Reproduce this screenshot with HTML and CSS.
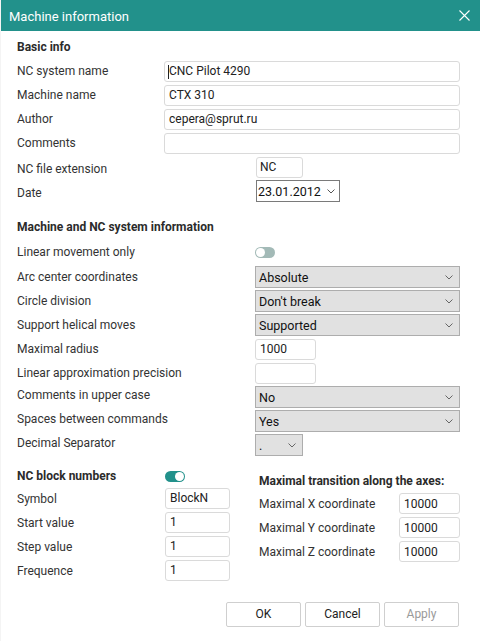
FILE: index.html
```html
<!DOCTYPE html>
<html>
<head>
<meta charset="utf-8">
<link rel="stylesheet" href="styles.css">
</head>
<body>
<div class="dialog">
  <div class="titlebar">
    <span class="title">Machine information</span>
    <svg class="close" width="11" height="11" viewBox="0 0 11 11"><path d="M0.5 0.5L10.5 10.5M10.5 0.5L0.5 10.5" stroke="#fff" stroke-width="1.1" fill="none"/></svg>
  </div>
  <div class="body">
    <div class="section basic">
      <div class="heading">Basic info</div>
      <div class="row"><span class="label">NC system name</span><div class="field wide"><span class="caret"></span>CNC Pilot 4290</div></div>
      <div class="row"><span class="label">Machine name</span><div class="field wide">CTX 310</div></div>
      <div class="row"><span class="label">Author</span><div class="field wide">cepera@sprut.ru</div></div>
      <div class="row"><span class="label">Comments</span><div class="field wide"></div></div>
      <div class="row"><span class="label down">NC file extension</span><div class="field ext">NC</div></div>
      <div class="row"><span class="label down">Date</span><div class="date">23.01.2012<svg class="chev" width="8" height="5" viewBox="0 0 8 5"><path d="M0.5 0.5L4 4L7.5 0.5" stroke="#555" fill="none"/></svg></div></div>
    </div>

    <div class="section machine">
      <div class="heading">Machine and NC system information</div>
      <div class="row trow"><span class="label">Linear movement only</span><span class="toggle off"><span class="knob"></span></span></div>
      <div class="row"><span class="label">Arc center coordinates</span><div class="select full">Absolute<svg class="chev" width="8" height="5" viewBox="0 0 8 5"><path d="M0.5 0.5L4 4L7.5 0.5" stroke="#666" fill="none"/></svg></div></div>
      <div class="row"><span class="label">Circle division</span><div class="select full">Don't break<svg class="chev" width="8" height="5" viewBox="0 0 8 5"><path d="M0.5 0.5L4 4L7.5 0.5" stroke="#666" fill="none"/></svg></div></div>
      <div class="row"><span class="label">Support helical moves</span><div class="select full">Supported<svg class="chev" width="8" height="5" viewBox="0 0 8 5"><path d="M0.5 0.5L4 4L7.5 0.5" stroke="#666" fill="none"/></svg></div></div>
      <div class="row"><span class="label">Maximal radius</span><div class="field num">1000</div></div>
      <div class="row"><span class="label">Linear approximation precision</span><div class="field num"></div></div>
      <div class="row"><span class="label up">Comments in upper case</span><div class="select full">No<svg class="chev" width="8" height="5" viewBox="0 0 8 5"><path d="M0.5 0.5L4 4L7.5 0.5" stroke="#666" fill="none"/></svg></div></div>
      <div class="row"><span class="label up">Spaces between commands</span><div class="select full">Yes<svg class="chev" width="8" height="5" viewBox="0 0 8 5"><path d="M0.5 0.5L4 4L7.5 0.5" stroke="#666" fill="none"/></svg></div></div>
      <div class="row"><span class="label up">Decimal Separator</span><div class="select small">.<svg class="chev" width="8" height="5" viewBox="0 0 8 5"><path d="M0.5 0.5L4 4L7.5 0.5" stroke="#666" fill="none"/></svg></div></div>
    </div>

    <div class="bottom">
      <div class="col left">
        <div class="hrow"><span class="heading">NC block numbers</span><span class="toggle on"><span class="knob"></span></span></div>
        <div class="row"><span class="label">Symbol</span><div class="field blk">BlockN</div></div>
        <div class="row"><span class="label">Start value</span><div class="field blk">1</div></div>
        <div class="row"><span class="label">Step value</span><div class="field blk">1</div></div>
        <div class="row"><span class="label">Frequence</span><div class="field blk">1</div></div>
      </div>
      <div class="col right">
        <div class="heading">Maximal transition along the axes:</div>
        <div class="row"><span class="label">Maximal X coordinate</span><div class="field ax">10000</div></div>
        <div class="row"><span class="label">Maximal Y coordinate</span><div class="field ax">10000</div></div>
        <div class="row"><span class="label">Maximal Z coordinate</span><div class="field ax">10000</div></div>
      </div>
    </div>

    <div class="buttons">
      <div class="btn">OK</div>
      <div class="btn">Cancel</div>
      <div class="btn disabled">Apply</div>
    </div>
  </div>
</div>
</body>
</html>
```

FILE: styles.css
```css
* { box-sizing: border-box; }
html, body { margin: 0; padding: 0; background: #fff; }
body {
  font-family: Roboto, "Noto Sans", sans-serif;
  font-size: 12px;
  color: #333;
  width: 480px;
  height: 641px;
  overflow: hidden;
}
.dialog {
  width: 480px;
  height: 641px;
  border-left: 1px solid #f4f4f4;
}
.titlebar {
  height: 31px;
  background: #22918b;
  display: flex;
  align-items: center;
  justify-content: space-between;
  padding: 0 10px 0 8px;
}
.title {
  color: #fff;
  font-size: 13px;
  padding-top: 1px;
}
.close { display: block; }
.body {
  padding: 8px 20px 0 16px;
}
.heading {
  font-weight: bold;
  color: #2b2b2b;
  height: 16px;
  line-height: 16px;
}
.basic .heading { margin-bottom: 4px; }
.row {
  display: flex;
  align-items: center;
  height: 24px;
}
.label {
  line-height: 16px;
}
.basic .label { width: 147px; flex: none; }
.basic .label.down { position: relative; top: 2px; }
.machine .label { width: 238px; flex: none; }
.machine .label.up { position: relative; top: -2px; }
.field {
  height: 21px;
  border: 1px solid #dadada;
  border-radius: 3px;
  background: #fff;
  padding: 0 4px;
  line-height: 19px;
  white-space: nowrap;
  color: #222;
  position: relative;
}
.field.wide { width: 296px; }
.field.ext { width: 47px; margin-left: 92px; padding-left: 3px; }
.caret {
  position: absolute;
  left: 3px;
  top: 3px;
  width: 1px;
  height: 14px;
  background: #222;
}
.date {
  margin-left: 92px;
  width: 84px;
  height: 22px;
  border: 1px solid #7a7a7a;
  background: #fff;
  display: flex;
  align-items: center;
  justify-content: space-between;
  padding: 0 4px 0 1px;
  color: #111;
  font-size: 12.5px;
}
.chev { display: block; flex: none; }
.machine {
  margin-top: 16px;
}
.machine .heading { margin-bottom: 4px; }
.trow { height: 26px; }
.toggle {
  display: inline-block;
  width: 20px;
  height: 11px;
  border-radius: 6px;
  position: relative;
  flex: none;
}
.toggle.off { background: #a3bab7; }
.toggle.on { background: #22918b; }
.toggle .knob {
  position: absolute;
  top: 1px;
  width: 9px;
  height: 9px;
  border-radius: 50%;
  background: #fff;
}
.toggle.off .knob { left: 1px; }
.toggle.on .knob { right: 1px; }
.select {
  height: 22px;
  background: #e1e1e1;
  border: 1px solid #adadad;
  display: flex;
  align-items: center;
  justify-content: space-between;
  padding: 0 6px 0 3px;
  color: #111;
  font-size: 12.5px;
}
.select.full { width: 205px; }
.select.small { width: 48px; }
.field.num { width: 61px; }
.bottom {
  display: flex;
  margin-top: 11px;
}
.col.left { width: 242px; flex: none; }
.left .hrow {
  display: flex;
  align-items: center;
  height: 16px;
  margin-bottom: 2.5px;
}
.left .hrow .heading { width: 148px; }
.left .label { width: 148px; flex: none; }
.field.blk { width: 65px; }
.col.right { padding-top: 4.5px; }
.right .heading { margin-bottom: 3px; }
.right .label { width: 140px; flex: none; }
.field.ax { width: 61px; padding-top: 1px; }
.buttons {
  display: flex;
  justify-content: flex-end;
  gap: 4px;
  margin-top: 19px;
  padding-right: 1px;
}
.btn {
  width: 75px;
  height: 25px;
  border: 1px solid #cfcfcf;
  border-radius: 2px;
  background: #fff;
  display: flex;
  align-items: center;
  justify-content: center;
  color: #222;
}
.btn.disabled { color: #9a9a9a; }
```
